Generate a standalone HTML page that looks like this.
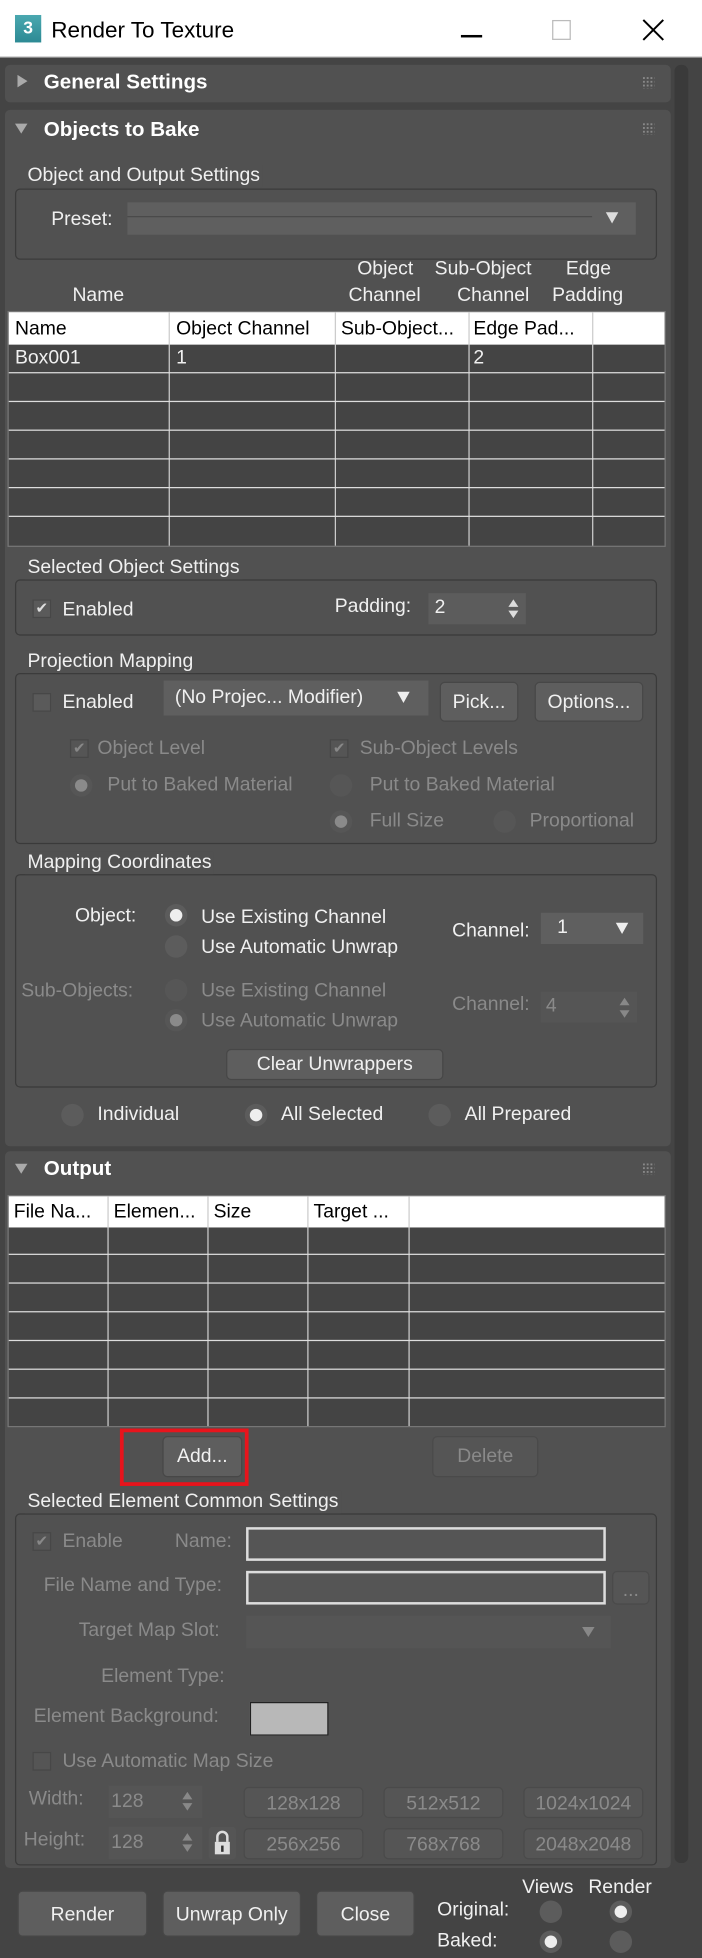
<!DOCTYPE html>
<html><head><meta charset="utf-8"><style>
*{margin:0;padding:0;box-sizing:border-box}
html,body{width:702px;height:1958px;overflow:hidden;background:#444}
#w{position:absolute;left:0;top:0;width:562px;height:1568px;transform:scale(1.2491,1.2487);transform-origin:0 0;background:#444;font-family:"Liberation Sans",sans-serif;font-size:15.5px;color:#f0f0f0}
#w div{position:absolute}
.t{line-height:18px;height:18px;white-space:nowrap}
.d{color:#8a8a8a}
.ro{background:#515151;border-radius:4px;left:4px;width:533px}
.hd{font-weight:bold;font-size:16.5px;color:#fff}
.gr{border:1px solid #3a3a3a;border-radius:4px;left:12px;width:514px}
.gl{background:#515151;padding:0 2px;line-height:18px;white-space:nowrap}
.btn{background:#5e5e5e;border-radius:4px;border:1px solid #474747;text-align:center;color:#f0f0f0}
.dbtn{background:#555;border-radius:4px;border:1px solid #4a4a4a;text-align:center;color:#8a8a8a}
.cb{width:15px;height:15px;background:#5a5a5a;border:1px solid #474747}
.rd{width:18px;height:18px;border-radius:50%;background:#5c5c5c}
.rd.on:after{content:"";position:absolute;left:4px;top:4px;width:10px;height:10px;border-radius:50%;background:#eee}
.rd.dis{background:#565656}
.rd.dis.on:after{background:#8a8a8a}
.grip{width:10px;height:10px;background-image:radial-gradient(#888 40%,transparent 45%);background-size:3px 3px}
.tbl{background:#444;border:1px solid #777}
.hl{height:1px;background:#ddd}
.vl{width:1px;background:#ddd}
.in{background:#5c5c5c}
</style></head><body><div id="w">
<!-- title -->
<div style="left:0;top:0;width:562px;height:46px;background:#fff;border-bottom:1px solid #ccc"></div>
<div style="left:12px;top:12px;width:21px;height:22px;background:linear-gradient(#4aa8b0,#2d8a94);color:#fff;font-weight:bold;font-size:14px;text-align:center;line-height:20px">3</div>
<div class="t" style="left:41px;top:14px;color:#000;font-size:18px;line-height:20px;height:20px">Render To Texture</div>
<div style="left:369px;top:28px;width:17px;height:2px;background:#000"></div>
<div style="left:442px;top:16px;width:15px;height:16px;border:1px solid #bbb"></div>
<div style="left:511px;top:12px;width:24px;height:24px"><svg width="24" height="24"><path d="M4 4L20 20M20 4L4 20" stroke="#000" stroke-width="1.6"/></svg></div>
<!-- scrollbar -->
<div style="left:540px;top:52px;width:11px;height:1440px;background:#3a3a3a;border-radius:5px"></div>
<!-- General -->
<div class="ro" style="top:52px;height:30px"></div>
<div style="left:14px;top:60px;width:0;height:0;border-left:8px solid #aaa;border-top:5px solid transparent;border-bottom:5px solid transparent"></div>
<div class="t hd" style="left:35px;top:57px">General Settings</div>
<div class="grip" style="left:514px;top:61px"></div>
<!-- Objects to Bake -->
<div class="ro" style="top:88px;height:830px"></div>
<div style="left:12px;top:99px;width:0;height:0;border-top:8px solid #aaa;border-left:5px solid transparent;border-right:5px solid transparent"></div>
<div class="t hd" style="left:35px;top:95px">Objects to Bake</div>
<div class="grip" style="left:514px;top:98px"></div>
<div class="gr" style="top:151px;height:57px"></div>
<div class="gl" style="left:20px;top:132px">Object and Output Settings</div>
<div class="t" style="left:41px;top:167px">Preset:</div>
<div style="left:102px;top:162px;width:407px;height:26px;background:#5f5f5f"><div style="left:0;top:11px;width:372px;height:1px;background:#4a4a4a"></div><div style="left:383px;top:8px;border-top:9px solid #ddd;border-left:5px solid transparent;border-right:5px solid transparent"></div></div>
<div class="t" style="left:286px;top:207px">Object</div>
<div class="t" style="left:279px;top:228px">Channel</div>
<div class="t" style="left:348px;top:207px">Sub-Object</div>
<div class="t" style="left:366px;top:228px">Channel</div>
<div class="t" style="left:453px;top:207px">Edge</div>
<div class="t" style="left:442px;top:228px">Padding</div>
<div class="t" style="left:58px;top:228px">Name</div>
<div class="tbl" style="left:6px;top:249px;width:527px;height:189px">
 <div style="left:0;top:0;width:525px;height:26px;background:#fff"></div>
 <div class="t" style="left:5px;top:5px;color:#000">Name</div>
 <div class="t" style="left:134px;top:5px;color:#000">Object Channel</div>
 <div class="t" style="left:266px;top:5px;color:#000">Sub-Object...</div>
 <div class="t" style="left:372px;top:5px;color:#000">Edge Pad...</div>
 <div class="t" style="left:5px;top:28px">Box001</div>
 <div class="t" style="left:134px;top:28px">1</div>
 <div class="t" style="left:372px;top:28px">2</div>
 <div class="vl" style="left:128px;top:0;height:187px;background:#ccc"></div>
 <div class="vl" style="left:261px;top:0;height:187px;background:#ccc"></div>
 <div class="vl" style="left:368px;top:0;height:187px;background:#ccc"></div>
 <div class="vl" style="left:467px;top:0;height:187px;background:#ccc"></div>
 <div class="hl" style="left:0;top:48px;width:525px"></div>
 <div class="hl" style="left:0;top:71px;width:525px"></div>
 <div class="hl" style="left:0;top:94px;width:525px"></div>
 <div class="hl" style="left:0;top:117px;width:525px"></div>
 <div class="hl" style="left:0;top:140px;width:525px"></div>
 <div class="hl" style="left:0;top:163px;width:525px"></div>
</div>
<!-- Selected object settings -->
<div class="gr" style="top:464px;height:45px"></div>
<div class="gl" style="left:20px;top:446px">Selected Object Settings</div>
<div class="cb" style="left:26px;top:480px;color:#ddd;font-size:12px;line-height:13px;text-align:center">✔</div>
<div class="t" style="left:50px;top:480px">Enabled</div>
<div class="t" style="left:268px;top:477px">Padding:</div>
<div class="in" style="left:343px;top:475px;width:78px;height:25px"></div>
<div class="t" style="left:348px;top:478px">2</div>
<div style="left:407px;top:480px;border-bottom:6px solid #ddd;border-left:4px solid transparent;border-right:4px solid transparent"></div>
<div style="left:407px;top:489px;border-top:6px solid #ddd;border-left:4px solid transparent;border-right:4px solid transparent"></div>
<!-- Projection -->
<div class="gr" style="top:539px;height:137px"></div>
<div class="gl" style="left:20px;top:521px">Projection Mapping</div>
<div class="cb" style="left:26px;top:555px"></div>
<div class="t" style="left:50px;top:554px">Enabled</div>
<div class="in" style="left:131px;top:545px;width:212px;height:28px;background:#5f5f5f"></div>
<div class="t" style="left:140px;top:550px">(No Projec... Modifier)</div>
<div style="left:318px;top:554px;border-top:9px solid #eee;border-left:5px solid transparent;border-right:5px solid transparent"></div>
<div class="btn t" style="left:352px;top:546px;width:63px;height:32px;line-height:32px">Pick...</div>
<div class="btn t" style="left:428px;top:546px;width:87px;height:32px;line-height:32px">Options...</div>
<div class="cb d" style="left:56px;top:592px;color:#888;font-size:12px;line-height:13px;text-align:center;background:#555">✔</div>
<div class="t d" style="left:78px;top:591px">Object Level</div>
<div class="cb d" style="left:264px;top:592px;color:#888;font-size:12px;line-height:13px;text-align:center;background:#555">✔</div>
<div class="t d" style="left:288px;top:591px">Sub-Object Levels</div>
<div class="rd dis on" style="left:56px;top:620px"></div>
<div class="t d" style="left:86px;top:620px">Put to Baked Material</div>
<div class="rd dis" style="left:264px;top:620px"></div>
<div class="t d" style="left:296px;top:620px">Put to Baked Material</div>
<div class="rd dis on" style="left:264px;top:649px"></div>
<div class="t d" style="left:296px;top:649px">Full Size</div>
<div class="rd dis" style="left:395px;top:649px"></div>
<div class="t d" style="left:424px;top:649px">Proportional</div>
<!-- Mapping Coordinates -->
<div class="gr" style="top:700px;height:171px"></div>
<div class="gl" style="left:20px;top:682px">Mapping Coordinates</div>
<div class="t" style="left:60px;top:725px">Object:</div>
<div class="rd on" style="left:132px;top:724px"></div>
<div class="t" style="left:161px;top:726px">Use Existing Channel</div>
<div class="rd" style="left:132px;top:749px"></div>
<div class="t" style="left:161px;top:750px">Use Automatic Unwrap</div>
<div class="t" style="left:362px;top:737px">Channel:</div>
<div style="left:433px;top:731px;width:82px;height:25px;background:#5f5f5f"></div>
<div class="t" style="left:446px;top:734px">1</div>
<div style="left:493px;top:739px;border-top:9px solid #eee;border-left:5px solid transparent;border-right:5px solid transparent"></div>
<div class="t d" style="left:17px;top:785px">Sub-Objects:</div>
<div class="rd dis" style="left:132px;top:784px"></div>
<div class="t d" style="left:161px;top:785px">Use Existing Channel</div>
<div class="rd dis on" style="left:132px;top:808px"></div>
<div class="t d" style="left:161px;top:809px">Use Automatic Unwrap</div>
<div class="t d" style="left:362px;top:796px">Channel:</div>
<div style="left:433px;top:794px;width:77px;height:25px;background:#555"></div>
<div class="t d" style="left:437px;top:797px">4</div>
<div style="left:496px;top:799px;border-bottom:6px solid #888;border-left:4px solid transparent;border-right:4px solid transparent"></div>
<div style="left:496px;top:809px;border-top:6px solid #888;border-left:4px solid transparent;border-right:4px solid transparent"></div>
<div class="btn t" style="left:181px;top:840px;width:174px;height:25px;line-height:24px">Clear Unwrappers</div>
<div class="rd" style="left:49px;top:884px"></div>
<div class="t" style="left:78px;top:884px">Individual</div>
<div class="rd on" style="left:196px;top:884px"></div>
<div class="t" style="left:225px;top:884px">All Selected</div>
<div class="rd" style="left:343px;top:884px"></div>
<div class="t" style="left:372px;top:884px">All Prepared</div>
<!-- Output -->
<div class="ro" style="top:922px;height:574px"></div>
<div style="left:12px;top:932px;width:0;height:0;border-top:8px solid #aaa;border-left:5px solid transparent;border-right:5px solid transparent"></div>
<div class="t hd" style="left:35px;top:927px">Output</div>
<div class="grip" style="left:514px;top:931px"></div>
<div class="tbl" style="left:6px;top:957px;width:527px;height:186px">
 <div style="left:0;top:0;width:525px;height:25px;background:#fff"></div>
 <div class="t" style="left:4px;top:4px;color:#000">File Na...</div>
 <div class="t" style="left:84px;top:4px;color:#000">Elemen...</div>
 <div class="t" style="left:164px;top:4px;color:#000">Size</div>
 <div class="t" style="left:244px;top:4px;color:#000">Target ...</div>
 <div class="vl" style="left:79px;top:0;height:184px;background:#ccc"></div>
 <div class="vl" style="left:159px;top:0;height:184px;background:#ccc"></div>
 <div class="vl" style="left:239px;top:0;height:184px;background:#ccc"></div>
 <div class="vl" style="left:320px;top:0;height:184px;background:#ccc"></div>
 <div class="hl" style="left:0;top:46px;width:525px"></div>
 <div class="hl" style="left:0;top:69px;width:525px"></div>
 <div class="hl" style="left:0;top:92px;width:525px"></div>
 <div class="hl" style="left:0;top:115px;width:525px"></div>
 <div class="hl" style="left:0;top:138px;width:525px"></div>
 <div class="hl" style="left:0;top:161px;width:525px"></div>
</div>
<div style="left:96px;top:1144px;width:103px;height:46px;border:3px solid #e8141c"></div>
<div class="btn t" style="left:130px;top:1150px;width:64px;height:33px;line-height:32px">Add...</div>
<div class="dbtn t" style="left:346px;top:1150px;width:85px;height:33px;line-height:32px">Delete</div>
<div class="gr" style="top:1212px;height:282px"></div>
<div class="gl" style="left:20px;top:1194px">Selected Element Common Settings</div>
<div class="cb" style="left:26px;top:1227px;color:#888;font-size:12px;line-height:13px;text-align:center;background:#555">✔</div>
<div class="t d" style="left:50px;top:1226px">Enable</div>
<div class="t d" style="left:140px;top:1226px">Name:</div>
<div style="left:197px;top:1223px;width:288px;height:27px;border:2px solid #ddd;background:#555"></div>
<div class="t d" style="left:35px;top:1261px">File Name and Type:</div>
<div style="left:197px;top:1258px;width:288px;height:27px;border:2px solid #ddd;background:#555"></div>
<div class="dbtn t" style="left:490px;top:1258px;width:30px;height:27px;line-height:30px">...</div>
<div class="t d" style="left:63px;top:1297px">Target Map Slot:</div>
<div style="left:197px;top:1294px;width:292px;height:26px;background:#555"></div>
<div style="left:466px;top:1303px;border-top:8px solid #888;border-left:5px solid transparent;border-right:5px solid transparent"></div>
<div class="t d" style="left:81px;top:1334px">Element Type:</div>
<div class="t d" style="left:27px;top:1366px">Element Background:</div>
<div style="left:200px;top:1363px;width:63px;height:27px;background:#b8b8b8;border:1px solid #222"></div>
<div class="cb" style="left:26px;top:1403px;background:#555"></div>
<div class="t d" style="left:50px;top:1402px">Use Automatic Map Size</div>
<div class="t d" style="left:23px;top:1432px">Width:</div>
<div style="left:87px;top:1430px;width:75px;height:26px;background:#555"></div>
<div class="t d" style="left:89px;top:1434px">128</div>
<div style="left:146px;top:1435px;border-bottom:6px solid #888;border-left:4px solid transparent;border-right:4px solid transparent"></div>
<div style="left:146px;top:1444px;border-top:6px solid #888;border-left:4px solid transparent;border-right:4px solid transparent"></div>
<div class="t d" style="left:19px;top:1465px">Height:</div>
<div style="left:87px;top:1463px;width:75px;height:26px;background:#555"></div>
<div class="t d" style="left:89px;top:1467px">128</div>
<div style="left:146px;top:1468px;border-bottom:6px solid #888;border-left:4px solid transparent;border-right:4px solid transparent"></div>
<div style="left:146px;top:1477px;border-top:6px solid #888;border-left:4px solid transparent;border-right:4px solid transparent"></div>
<div style="left:167px;top:1463px;width:22px;height:26px;background:#555;border-radius:3px"><svg width="22" height="26"><path d="M7 12V8a4 4 0 0 1 8 0v4" stroke="#ddd" stroke-width="2" fill="none"/><rect x="5" y="12" width="12" height="10" fill="#ddd"/><rect x="10" y="15" width="2" height="5" fill="#333"/></svg></div>
<div class="dbtn t" style="left:195px;top:1431px;width:96px;height:25px;line-height:25px">128x128</div>
<div class="dbtn t" style="left:307px;top:1431px;width:96px;height:25px;line-height:25px">512x512</div>
<div class="dbtn t" style="left:419px;top:1431px;width:96px;height:25px;line-height:25px">1024x1024</div>
<div class="dbtn t" style="left:195px;top:1464px;width:96px;height:25px;line-height:25px">256x256</div>
<div class="dbtn t" style="left:307px;top:1464px;width:96px;height:25px;line-height:25px">768x768</div>
<div class="dbtn t" style="left:419px;top:1464px;width:96px;height:25px;line-height:25px">2048x2048</div>
<!-- footer -->
<div class="btn t" style="left:14px;top:1514px;width:104px;height:37px;line-height:37px">Render</div>
<div class="btn t" style="left:130px;top:1514px;width:111px;height:37px;line-height:37px">Unwrap Only</div>
<div class="btn t" style="left:253px;top:1514px;width:79px;height:37px;line-height:37px">Close</div>
<div class="t" style="left:418px;top:1503px">Views</div>
<div class="t" style="left:471px;top:1503px">Render</div>
<div class="t" style="left:350px;top:1521px">Original:</div>
<div class="t" style="left:350px;top:1546px">Baked:</div>
<div class="rd" style="left:432px;top:1522px"></div>
<div class="rd on" style="left:488px;top:1522px"></div>
<div class="rd on" style="left:432px;top:1546px"></div>
<div class="rd" style="left:488px;top:1546px"></div>
</div></body></html>
